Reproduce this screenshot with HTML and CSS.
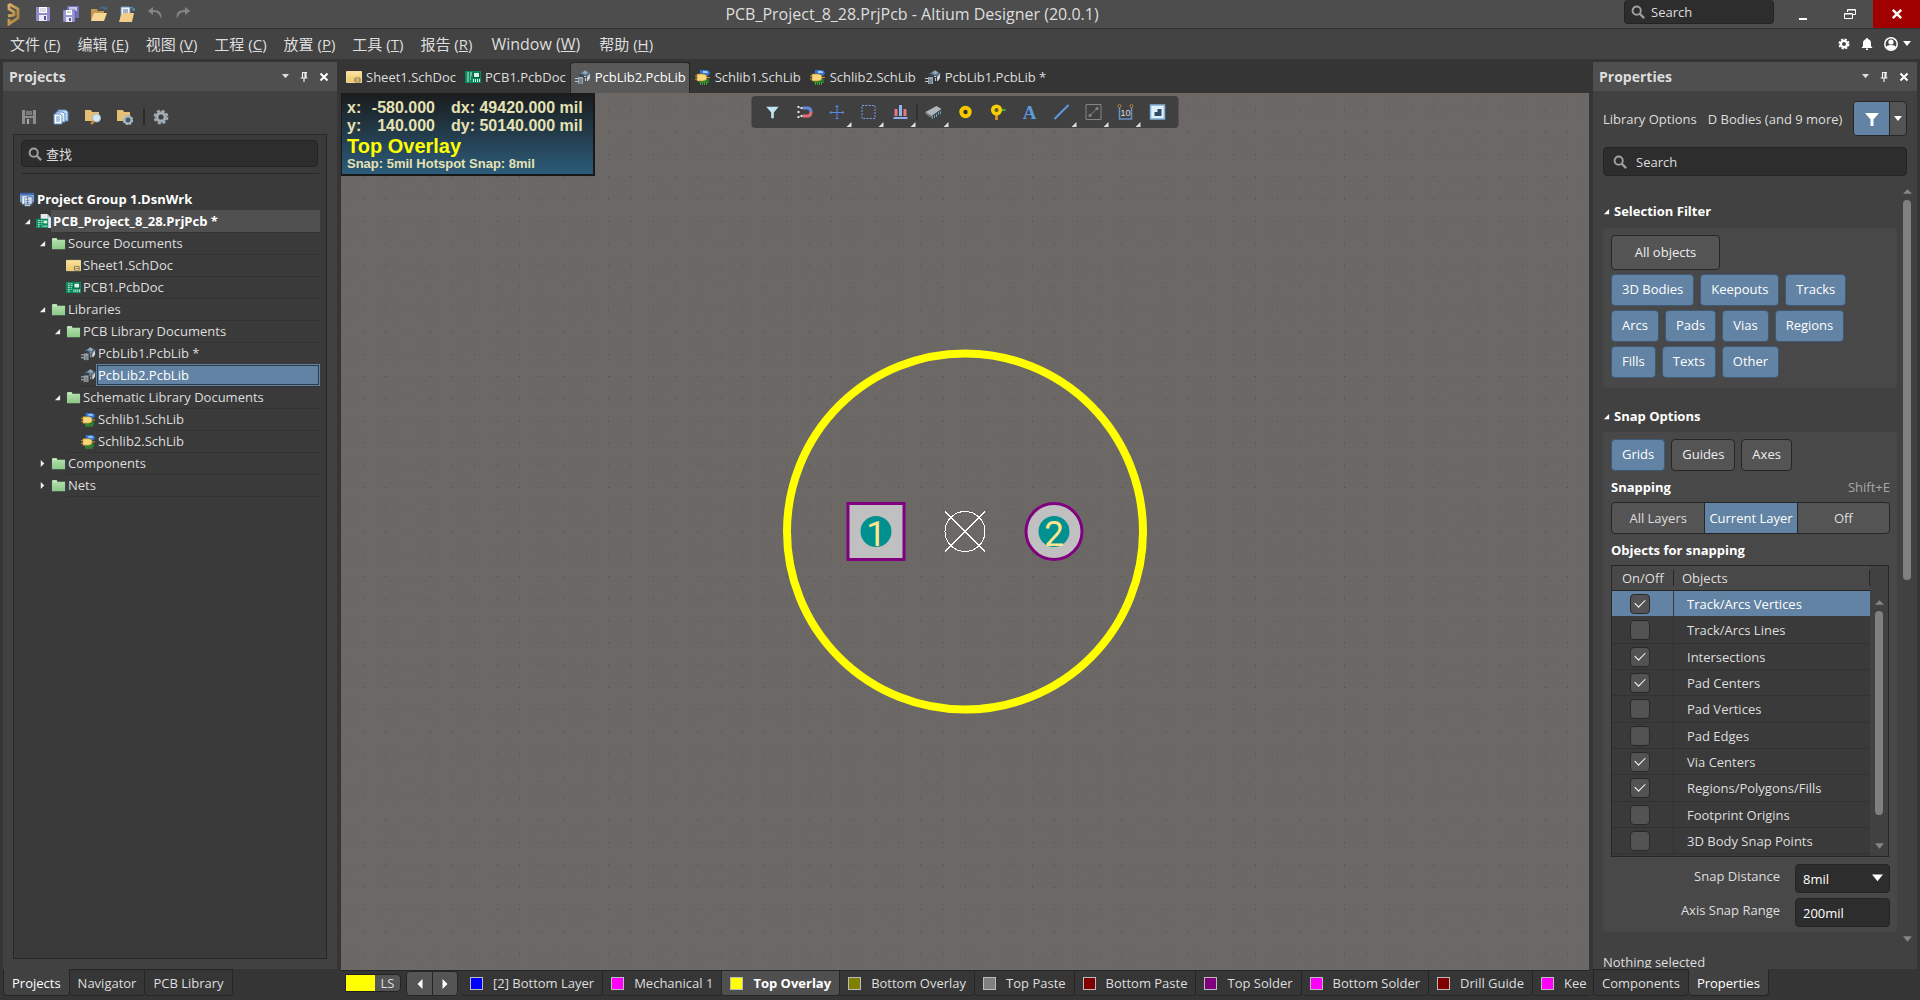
FILE: index.html
```html
<!DOCTYPE html>
<html lang="zh-CN">
<head>
<meta charset="utf-8">
<title>PCB_Project_8_28.PrjPcb - Altium Designer (20.0.1)</title>
<link rel="stylesheet" href="styles.css">
</head>
<body>
<svg class="defs" aria-hidden="true">
  <defs>
    <linearGradient id="gFolder" x1="0" y1="0" x2="0" y2="1"><stop offset="0" stop-color="#b8e2b2"/><stop offset="1" stop-color="#8cc888"/></linearGradient>
    <linearGradient id="gSheet" x1="0" y1="0" x2="0" y2="1"><stop offset="0" stop-color="#fbe3a0"/><stop offset="1" stop-color="#e9c766"/></linearGradient>
    <linearGradient id="gGold" x1="0" y1="0" x2="1" y2="1"><stop offset="0" stop-color="#d8b368"/><stop offset="1" stop-color="#a87f38"/></linearGradient>
    <symbol id="folder" viewBox="0 0 16 16"><path d="M1 4V3l1-1h4l1 2h8v10H1z" fill="url(#gFolder)"/><path d="M2 4h4" stroke="#d6f0d2"/></symbol>
    <symbol id="sheet" viewBox="0 0 16 16"><path d="M.5 2.500h15v11H.5z" fill="url(#gSheet)" stroke="#f4dc9c"/><path d="M9 9h5v4H9z" fill="#fff0c0" stroke="#8a7440"/><path d="M9 11h5" stroke="#8a7440"/></symbol>
    <symbol id="pcb" viewBox="0 0 16 16"><path d="M0 2h16v12H0z" fill="#0c8a5e"/><path d="M8 3h1v5h5V3h1v6H8z" fill="#065a3c"/><path d="M9 4h5v4H9z" fill="#d9f3e8"/><path d="M2 4h2m1 0h2M2 6h2m1 0h2M2 8h2m1 0h1M2 10h2m1 0h1M2 12h2" stroke="#bff0d8"/><path d="M8.500 10v3m2-3v3m2-3v3m2-3v3" stroke="#c4f0dc" stroke-width="1"/></symbol>
    <symbol id="pcblib" viewBox="0 0 16 16"><path d="M4 5l6-4 6 4-3 3-6-2z" fill="#5c7387"/><path d="M7 4l3-2.500 3 2-2 2z" fill="#93aaba"/><path d="M12 8l3-3v4l-2 3h-1z" fill="#cdd6dc"/><path d="M3 6l3-1 6 3-1 1-6-2z" fill="#35424d"/><path d="M3 8h5v7H3z" fill="#98a3ab"/><path d="M4 10h3v5H4z" fill="#76828c"/><path d="M0 9.500h3M0 12.500h3M9 7.500h2M10.500 9v3" stroke="#c3ccd2"/></symbol>
    <symbol id="schlib" viewBox="0 0 16 16"><path d="M5 1h6q3 0 4 3-1 3-4 3H5z" fill="#3277d8"/><path d="M8 2h3q2 0 2 2H8z" fill="#a6cdf8"/><path d="M4 10h10v4H4z" fill="#1f7b2b"/><path d="M5.500 13v3m2-3v3m2-3v3m2-3v3" stroke="#44a23c"/><path d="M2 5h6q4 0 4 3.500T8 12H2z" fill="#f7d67c" stroke="#a77b1a" stroke-width=".6"/><path d="M0 7h2M0 10h2m10-1.500h3" stroke="#d09b20"/></symbol>
    <symbol id="workspace" viewBox="0 0 16 16"><path d="M0 1h15v10H0z" fill="#7aa2dc"/><path d="M0 1h15v2H0z" fill="#3d67b1"/><path d="M2 4h6v9H2zM5 6h6v9H5z" fill="#e8f0fb" stroke="#60748e" stroke-width=".7"/><path d="M8 5h5v8H8z" fill="#cddcf2" stroke="#556c8c" stroke-width=".7"/><path d="M6 9h4M6 11h4M6 13h4" stroke="#5b7fb6" stroke-width=".8"/></symbol>
    <symbol id="project" viewBox="0 0 16 16"><path d="M5 0h7l4 4v11H5z" fill="#e6e9f1"/><path d="M12 0l4 4h-4z" fill="#b5bccd"/><path d="M0 5h13v10H0z" fill="#0c8a5e"/><path d="M2 7h2m1 0h2M2 9h2m1 0h2M2 11h2m1 0h1M2 13h2" stroke="#bff0d8"/><path d="M8 7h4v3H8z" fill="#d9f3e8"/><path d="M7.500 12v2m2-2v2m2-2v2" stroke="#c4f0dc"/></symbol>
    <symbol id="save" viewBox="0 0 16 16"><path d="M1 1h14v14H1z" fill="#8d8bc8"/><path d="M4 1h8v6H4z" fill="#fff"/><path d="M5 3h6M5 5h6" stroke="#b8b8cc"/><path d="M4 9h8v6H4z" fill="#e8e8f6"/><path d="M9 10h2v4H9z" fill="#55539a"/></symbol>
    <symbol id="savegray" viewBox="0 0 16 16"><path d="M1 1h14v14H1z" fill="#8b8b8b"/><path d="M4 1h8v6H4z" fill="#494949"/><path d="M5 3h6M5 5h6" stroke="#aaa"/><path d="M4 9h8v6H4z" fill="#4b4b4b"/><path d="M6 10h2v5H6z" fill="#aaa"/></symbol>
    <symbol id="saveall" viewBox="0 0 16 16"><path d="M4 0h12v12H4z" fill="#7270b4"/><path d="M6 1h8v4H6z" fill="#c9c8e8"/><path d="M0 4h12v12H0z" fill="#9a98d4" stroke="#5b599c" stroke-width=".6"/><path d="M3 4h6v5H3z" fill="#fff"/><path d="M4 6h4" stroke="#99a"/><path d="M3 11h6v5H3z" fill="#e8e8f6"/><path d="M6 12h2v3H6z" fill="#55539a"/></symbol>
    <symbol id="open" viewBox="0 0 16 16"><path d="M0 3h6l1 2h6v9H0z" fill="#c49a50"/><path d="M0 15L3 7h13l-3 8z" fill="#f6d694"/><path d="M9 3q3-4 5 0M12 3h3V0" fill="none" stroke="#3f739f" stroke-width="1.200"/></symbol>
    <symbol id="openproj" viewBox="0 0 16 16"><path d="M2 1h9v12H2z" fill="#eef3fb" stroke="#7390b5"/><path d="M4 4h5M4 6h5M4 8h5" stroke="#54759d"/><path d="M0 16l2-7 3-2h10l-2 9z" fill="#f2cd88"/><path d="M11 2q3-2 4 2M13 4h3V2" fill="none" stroke="#58a0d8"/></symbol>
    <symbol id="undo" viewBox="0 0 16 16"><path d="M6 1L1 5l5 4V6q6-1 8 7 2-9-8-9z" fill="#868686"/></symbol>
    <symbol id="docs" viewBox="0 0 16 16"><path d="M5 1h8l2 2v9H5z" fill="#bed8f7" stroke="#5b8cc5"/><path d="M3 3h7l2 2v8H3z" fill="#dfedfc" stroke="#5b8cc5"/><path d="M1 5h6l2 2v8H1z" fill="#fff" stroke="#5b8cc5"/><path d="M3 8h4M3 10h4M3 12h4" stroke="#5b8cc5"/></symbol>
    <symbol id="foldersearch" viewBox="0 0 16 16"><path d="M0 1h6l1 2h7v9H0z" fill="#e6bf74"/><circle cx="11.500" cy="9" r="4" fill="#d5e5f2" stroke="#a4bacd"/><path d="M9 12l-3 3" stroke="#c58a3e" stroke-width="2.500"/></symbol>
    <symbol id="foldergear" viewBox="0 0 16 16"><path d="M0 1h6l1 2h6v9H0z" fill="#e6bf74"/><circle cx="11" cy="11" r="3.500" fill="#4a5964" stroke="#a9bac6" stroke-width="2"/><circle cx="11" cy="11" r="4.700" fill="none" stroke="#a9bac6" stroke-width="1.200" stroke-dasharray="2 1.700"/></symbol>
    <symbol id="gear" viewBox="0 0 16 16"><circle cx="8" cy="8" r="4.200" fill="none" stroke="currentColor" stroke-width="3.200"/><circle cx="8" cy="8" r="6.400" fill="none" stroke="currentColor" stroke-width="2" stroke-dasharray="3 2.030"/></symbol>
    <symbol id="lens" viewBox="0 0 16 16"><circle cx="6.500" cy="6.500" r="4.700" fill="none" stroke="#a0a0a0" stroke-width="2.200"/><path d="M10 10l5 5" stroke="#a0a0a0" stroke-width="2.600"/></symbol>
    <symbol id="down" viewBox="0 0 8 8"><path d="M0 1h8L4 6z" fill="currentColor"/></symbol>
    <symbol id="up" viewBox="0 0 8 8"><path d="M0 6h8L4 2z" fill="currentColor"/></symbol>
    <symbol id="right" viewBox="0 0 8 8"><path d="M2 0v8l4-4z" fill="currentColor"/></symbol>
    <symbol id="left" viewBox="0 0 8 8"><path d="M6 0v8L2 4z" fill="currentColor"/></symbol>
    <symbol id="open-arrow" viewBox="0 0 8 8"><path d="M7 1v6H1z" fill="currentColor"/></symbol>
    <symbol id="pin" viewBox="0 0 10 10"><path d="M3 .5h5M3.500 1v5M7 1v5M6 1v5M1.500 6h7M5 6v4" fill="none" stroke="#f0f0f0" stroke-width="1.200"/></symbol>
    <symbol id="close" viewBox="0 0 10 10"><path d="M1.500 1.500l7 7m0-7l-7 7" stroke="#fff" stroke-width="2"/></symbol>
    <symbol id="funnel" viewBox="0 0 16 16"><path d="M1 2h14L9.500 8.500V15h-3V8.500z" fill="currentColor"/></symbol>
  </defs>
</svg>

<header class="titlebar">
  <div class="quick">
    <svg width="16" height="24" viewBox="0 0 16 24"><path d="M4 2l9 5v9L4 22v-5M4 2v5l5 3v3l-6 1" fill="none" stroke="url(#gGold)" stroke-width="2.800"/></svg>
    <button type="button" aria-label="Save"><svg><use href="#save"/></svg></button>
    <button type="button" aria-label="Save all"><svg><use href="#saveall"/></svg></button>
    <button type="button" aria-label="Open"><svg><use href="#open"/></svg></button>
    <button type="button" aria-label="Open project"><svg><use href="#openproj"/></svg></button>
    <button type="button" aria-label="Undo"><svg><use href="#undo"/></svg></button>
    <button type="button" aria-label="Redo"><svg class="mirror"><use href="#undo"/></svg></button>
  </div>
  <h1>PCB_Project_8_28.PrjPcb - Altium Designer (20.0.1)</h1>
  <div class="window-tools">
    <label class="field top-search"><svg><use href="#lens"/></svg><input type="text" aria-label="Search" value="Search"></label>
    <button type="button" class="win" aria-label="Minimize"><svg width="12" height="12"><path d="M2 11h8" stroke="#fff" stroke-width="2"/></svg></button>
    <button type="button" class="win" aria-label="Restore"><svg width="12" height="12" viewBox="0 0 12 12"><path d="M.5 5.500h8v5h-8zM.5 6h8M3.500 4V1.500h8v5H9M3.500 2h8" fill="none" stroke="#fff"/></svg></button>
    <button type="button" class="win close" aria-label="Close"><svg width="12" height="12"><use href="#close"/></svg></button>
  </div>
</header>

<nav class="menubar">
  <a href="#">文件 (<u>F</u>)</a><a href="#">编辑 (<u>E</u>)</a><a href="#">视图 (<u>V</u>)</a><a href="#">工程 (<u>C</u>)</a><a href="#">放置 (<u>P</u>)</a><a href="#">工具 (<u>T</u>)</a><a href="#">报告 (<u>R</u>)</a><a href="#" class="latin">Window (<u>W</u>)</a><a href="#">帮助 (<u>H</u>)</a>
  <div class="account">
    <button type="button" aria-label="Settings"><svg width="12" height="12"><use href="#gear"/></svg></button>
    <button type="button" aria-label="Notifications"><svg width="12" height="12" viewBox="0 0 12 12"><path d="M6 0q1 0 1 1 3 1 3 4v3l1.500 2H.5L2 8V5q0-3 3-4 0-1 1-1zM5 10.500h2V12H5z" fill="#fff"/></svg></button>
    <button type="button" aria-label="Account"><svg width="14" height="14" viewBox="0 0 14 14"><circle cx="7" cy="7" r="6.200" fill="none" stroke="#fff" stroke-width="1.500"/><circle cx="7" cy="5" r="2.600" fill="#fff"/><path d="M2 11q0-3 5-3t5 3q-2 2-5 2t-5-2z" fill="#fff"/></svg><svg width="8" height="8"><use href="#down"/></svg></button>
  </div>
</nav>

<main class="workspace">
  <aside class="panel">
    <header class="panel-head"><h2>Projects</h2><button type="button" aria-label="Panel menu"><svg class="caret"><use href="#down"/></svg></button><button type="button" aria-label="Pin"><svg><use href="#pin"/></svg></button><button type="button" aria-label="Close panel"><svg><use href="#close"/></svg></button></header>
    <div class="panel-body projects">
      <div class="toolrow">
        <button type="button" aria-label="Save document"><svg><use href="#savegray"/></svg></button>
        <button type="button" aria-label="Compile"><svg><use href="#docs"/></svg></button>
        <button type="button" aria-label="Explore"><svg><use href="#foldersearch"/></svg></button>
        <button type="button" aria-label="Project options"><svg><use href="#foldergear"/></svg></button>
        <i></i>
        <button type="button" class="steel" aria-label="Settings"><svg><use href="#gear"/></svg></button>
      </div>
      <div class="treebox">
        <label class="field tree-search"><svg><use href="#lens"/></svg><input type="text" aria-label="查找" value="查找"></label>
        <ul class="tree">
          <li class="root bold"><svg><use href="#workspace"/></svg><span>Project Group 1.DsnWrk</span></li>
          <li class="l1 bold current"><svg class="arrow"><use href="#open-arrow"/></svg><svg><use href="#project"/></svg><span>PCB_Project_8_28.PrjPcb *</span></li>
          <li class="l2"><svg class="arrow"><use href="#open-arrow"/></svg><svg><use href="#folder"/></svg><span>Source Documents</span></li>
          <li class="l3"><svg class="arrow"></svg><svg><use href="#sheet"/></svg><span>Sheet1.SchDoc</span></li>
          <li class="l3"><svg class="arrow"></svg><svg><use href="#pcb"/></svg><span>PCB1.PcbDoc</span></li>
          <li class="l2"><svg class="arrow"><use href="#open-arrow"/></svg><svg><use href="#folder"/></svg><span>Libraries</span></li>
          <li class="l3"><svg class="arrow"><use href="#open-arrow"/></svg><svg><use href="#folder"/></svg><span>PCB Library Documents</span></li>
          <li class="l4"><svg class="arrow"></svg><svg><use href="#pcblib"/></svg><span>PcbLib1.PcbLib *</span></li>
          <li class="l4 selected"><svg class="arrow"></svg><svg><use href="#pcblib"/></svg><span>PcbLib2.PcbLib</span></li>
          <li class="l3"><svg class="arrow"><use href="#open-arrow"/></svg><svg><use href="#folder"/></svg><span>Schematic Library Documents</span></li>
          <li class="l4"><svg class="arrow"></svg><svg><use href="#schlib"/></svg><span>Schlib1.SchLib</span></li>
          <li class="l4"><svg class="arrow"></svg><svg><use href="#schlib"/></svg><span>Schlib2.SchLib</span></li>
          <li class="l2"><svg class="arrow"><use href="#right"/></svg><svg><use href="#folder"/></svg><span>Components</span></li>
          <li class="l2 last"><svg class="arrow"><use href="#right"/></svg><svg><use href="#folder"/></svg><span>Nets</span></li>
        </ul>
      </div>
    </div>
    <nav class="panel-tabs"><button type="button" class="on">Projects</button><button type="button">Navigator</button><button type="button">PCB Library</button></nav>
  </aside>

  <section class="editor">
    <nav class="doc-tabs">
      <button type="button"><svg><use href="#sheet"/></svg>Sheet1.SchDoc</button>
      <button type="button"><svg><use href="#pcb"/></svg>PCB1.PcbDoc</button>
      <button type="button" class="on"><svg><use href="#pcblib"/></svg>PcbLib2.PcbLib</button>
      <button type="button"><svg><use href="#schlib"/></svg>Schlib1.SchLib</button>
      <button type="button"><svg><use href="#schlib"/></svg>Schlib2.SchLib</button>
      <button type="button"><svg><use href="#pcblib"/></svg>PcbLib1.PcbLib *</button>
    </nav>
    <div class="canvas">
      <svg class="board" width="100%" height="100%">
        <defs>
          <pattern id="minor" width="4.460" height="4.440" patternUnits="userSpaceOnUse"><rect width="1" height="1" fill="#5e5a58" opacity=".4"/></pattern>
          <pattern id="major" width="22.300" height="22.200" patternUnits="userSpaceOnUse"><rect width="1" height="1" fill="#4b4846"/></pattern>
        </defs>
        <svg x="50%" y="50%" overflow="visible">
          <rect x="-1600" y="-1200" width="3200" height="2400" fill="url(#minor)"/>
          <rect x="-1600" y="-1200" width="3200" height="2400" fill="url(#major)"/>
          <circle r="178" fill="none" stroke="#ff0" stroke-width="8"/>
          <rect x="-117" y="-28" width="56" height="56" fill="#c0c0c0" stroke="#800080" stroke-width="3"/>
          <circle cx="-89" r="15.500" fill="#009090"/>
          <circle cx="89" r="28" fill="#c0c0c0" stroke="#800080" stroke-width="3"/>
          <circle cx="89" r="15.500" fill="#009090"/>
          <text class="pad-no" x="-89" y="14">1</text>
          <text class="pad-no" x="89" y="14">2</text>
          <g fill="none" stroke="#fff" shape-rendering="crispEdges"><circle r="20"/><path d="M-20-20l40 40M20-20l-40 40"/></g>
        </svg>
      </svg>
      <div class="hud">
        <div class="coords"><span>x:</span><span class="num">-580.000</span><span>dx: 49420.000 mil</span><span>y:</span><span class="num">140.000</span><span>dy: 50140.000 mil</span></div>
        <strong>Top Overlay</strong>
        <small>Snap: 5mil Hotspot Snap: 8mil</small>
      </div>
      <div class="toolbar">
        <button type="button" aria-label="Filter" class="pale"><svg viewBox="-1 -1 18 18"><use href="#funnel" width="16" height="16"/></svg></button>
        <button type="button" aria-label="Snap"><svg viewBox="0 0 16 16"><path d="M6 4h5q3.500 0 3.500 4" fill="none" stroke="#6688d8" stroke-width="3"/><path d="M14.500 8q0 4-3.500 4H6" fill="none" stroke="#e06c74" stroke-width="3"/><path d="M1 2h2v2H1zM1 7h2v2H1zM1 12h2v2H1zM4 3h2v2H4zM4 11h2v2H4z" fill="#dceaf0"/></svg></button>
        <button type="button" aria-label="Move" class="more"><svg viewBox="0 0 16 16"><path d="M8.500 1v14M1 8.500h14M7 2.500h3M7 14.500h3M2.500 7v3M14.500 7v3" fill="none" stroke="#5a87e0"/></svg></button>
        <button type="button" aria-label="Select area" class="more"><svg viewBox="0 0 16 16"><path d="M1.500 1.500h13v13h-13z" fill="none" stroke="#7ca0f0" stroke-dasharray="2 1.250"/></svg></button>
        <button type="button" aria-label="Align" class="more"><svg viewBox="0 0 16 16"><path d="M2 5h3v7H2zM11 5h3v7h-3z" fill="#e57880"/><path d="M6.500 1h3v11h-3z" fill="#8bb8e8"/><path d="M1 14h14" stroke="#8baef0" stroke-width="2"/></svg></button>
        <i></i>
        <button type="button" aria-label="Component" class="more"><svg viewBox="0 0 16 16"><path d="M0 8L11 2l5 3-10 7z" fill="#aeb8ba"/><path d="M0 8l6 4v2l-6-4z" fill="#748083"/><path d="M7 12v3M9 11v3M11 10v3M13 8v3M15 7v3" stroke="#66a0ae"/></svg></button>
        <button type="button" aria-label="Pad"><svg viewBox="0 0 16 16"><circle cx="8" cy="8" r="4.200" fill="#333" stroke="#f6c800" stroke-width="4"/></svg></button>
        <button type="button" aria-label="Via"><svg viewBox="0 0 16 16"><path d="M10 6h6" stroke="#54a836" stroke-width="2"/><path d="M7 8v8" stroke="#e89932" stroke-width="2.500"/><circle cx="7" cy="6" r="3.800" fill="#635a30" stroke="#f6d000" stroke-width="3.500"/></svg></button>
        <button type="button" aria-label="String"><svg viewBox="0 0 16 16"><text class="letter" x="8" y="15">A</text></svg></button>
        <button type="button" aria-label="Line" class="more"><svg viewBox="0 0 16 16"><path d="M1 15L15 1" stroke="#5c9ade" stroke-width="2"/></svg></button>
        <button type="button" aria-label="Dimension" class="more"><svg viewBox="0 0 16 16"><path d="M.5.5h15v15H.5zM5 11l6-6" fill="none" stroke="#858585"/><circle cx="4.500" cy="11.500" r="1.500" fill="#858585"/><circle cx="11.500" cy="4.500" r="1.500" fill="#858585"/></svg></button>
        <button type="button" aria-label="Measure" class="more"><svg viewBox="0 0 16 16"><path d="M2 3v12h12V3" fill="none" stroke="#6890c0" stroke-width="1.500"/><circle cx="2" cy="2" r="1.500" fill="#333" stroke="#b88738"/><circle cx="14" cy="2" r="1.500" fill="#333" stroke="#b88738"/><text class="ten" x="8" y="12">10</text></svg></button>
        <button type="button" aria-label="Board region"><svg viewBox="0 0 16 16"><path d="M1 1h14v14H1z" fill="#dff0fb" stroke="#80b0d8" stroke-width="1.500"/><path d="M8 5h4v7H5V8h3z" fill="#304b68"/></svg></button>
      </div>
    </div>
    <div class="layers">
      <button type="button" class="layer-set"><b></b><span>LS</span></button>
      <div class="stepper"><button type="button" aria-label="Previous layers"><svg><use href="#left"/></svg></button><button type="button" aria-label="Next layers"><svg><use href="#right"/></svg></button></div>
      <nav class="layer-tabs">
        <button type="button"><i class="c-blue"></i>[2] Bottom Layer</button>
        <button type="button"><i class="c-magenta"></i>Mechanical 1</button>
        <button type="button" class="on"><i class="c-yellow"></i>Top Overlay</button>
        <button type="button"><i class="c-olive"></i>Bottom Overlay</button>
        <button type="button"><i class="c-gray"></i>Top Paste</button>
        <button type="button"><i class="c-maroon"></i>Bottom Paste</button>
        <button type="button"><i class="c-purple"></i>Top Solder</button>
        <button type="button"><i class="c-magenta"></i>Bottom Solder</button>
        <button type="button"><i class="c-maroon"></i>Drill Guide</button>
        <button type="button"><i class="c-magenta"></i>Kee</button>
      </nav>
    </div>
  </section>

  <aside class="panel">
    <header class="panel-head"><h2>Properties</h2><button type="button" aria-label="Panel menu"><svg class="caret"><use href="#down"/></svg></button><button type="button" aria-label="Pin"><svg><use href="#pin"/></svg></button><button type="button" aria-label="Close panel"><svg><use href="#close"/></svg></button></header>
    <div class="panel-body props">
      <div class="scope"><span>Library Options</span><span>D Bodies (and 9 more)</span>
        <div class="split"><button type="button" class="blue" aria-label="Filter"><svg width="16" height="16"><use href="#funnel"/></svg></button><button type="button" aria-label="Filter menu"><svg width="8" height="8"><use href="#down"/></svg></button></div>
      </div>
      <label class="field prop-search"><svg><use href="#lens"/></svg><input type="text" aria-label="Search properties" value="Search"></label>
      <div class="scroll">
        <div class="sections">
          <h3><svg><use href="#open-arrow"/></svg>Selection Filter</h3>
          <div class="card">
            <div class="chips"><button type="button" class="wide">All objects</button></div>
            <div class="chips"><button type="button" class="blue">3D Bodies</button><button type="button" class="blue">Keepouts</button><button type="button" class="blue">Tracks</button></div>
            <div class="chips"><button type="button" class="blue">Arcs</button><button type="button" class="blue">Pads</button><button type="button" class="blue">Vias</button><button type="button" class="blue">Regions</button></div>
            <div class="chips"><button type="button" class="blue">Fills</button><button type="button" class="blue">Texts</button><button type="button" class="blue">Other</button></div>
          </div>
          <h3><svg><use href="#open-arrow"/></svg>Snap Options</h3>
          <div class="card">
            <div class="chips"><button type="button" class="blue">Grids</button><button type="button">Guides</button><button type="button">Axes</button></div>
            <div class="caption"><h4>Snapping</h4><span>Shift+E</span></div>
            <div class="segmented"><button type="button">All Layers</button><button type="button" class="blue">Current Layer</button><button type="button">Off</button></div>
            <div class="caption"><h4>Objects for snapping</h4></div>
            <div class="grid">
              <table>
                <thead><tr><th><span>On/Off</span></th><th><span>Objects</span></th></tr></thead>
                <tbody>
                  <tr class="hit"><td><input type="checkbox" id="o1" checked></td><td><label for="o1">Track/Arcs Vertices</label></td></tr>
                  <tr><td><input type="checkbox" id="o2"></td><td><label for="o2">Track/Arcs Lines</label></td></tr>
                  <tr><td><input type="checkbox" id="o3" checked></td><td><label for="o3">Intersections</label></td></tr>
                  <tr><td><input type="checkbox" id="o4" checked></td><td><label for="o4">Pad Centers</label></td></tr>
                  <tr><td><input type="checkbox" id="o5"></td><td><label for="o5">Pad Vertices</label></td></tr>
                  <tr><td><input type="checkbox" id="o6"></td><td><label for="o6">Pad Edges</label></td></tr>
                  <tr><td><input type="checkbox" id="o7" checked></td><td><label for="o7">Via Centers</label></td></tr>
                  <tr><td><input type="checkbox" id="o8" checked></td><td><label for="o8">Regions/Polygons/Fills</label></td></tr>
                  <tr><td><input type="checkbox" id="o9"></td><td><label for="o9">Footprint Origins</label></td></tr>
                  <tr><td><input type="checkbox" id="o10"></td><td><label for="o10">3D Body Snap Points</label></td></tr>
                </tbody>
              </table>
              <div class="bar inner"><svg><use href="#up"/></svg><div class="track"><b></b></div><svg><use href="#down"/></svg></div>
            </div>
            <div class="formrow"><label for="dist">Snap Distance</label><span class="field select"><select id="dist"><option>8mil</option></select><svg><use href="#down"/></svg></span></div>
            <div class="formrow"><label for="range">Axis Snap Range</label><span class="field"><input type="text" id="range" value="200mil"></span></div>
          </div>
        </div>
        <div class="bar outer"><svg><use href="#up"/></svg><div class="track"><b></b></div><svg><use href="#down"/></svg></div>
      </div>
      <p class="status">Nothing selected</p>
    </div>
    <nav class="panel-tabs"><button type="button">Components</button><button type="button" class="on">Properties</button></nav>
  </aside>
</main>
</body>
</html>
```
FILE: styles.css
```css
* { box-sizing: border-box; }
body {
  margin: 0; height: 100vh; overflow: hidden; display: flex; flex-direction: column;
  background: #353535; color: #dedede;
  font: 13px/20px "Open Sans", "Noto Sans CJK SC", sans-serif;
}
button, input, select { font: inherit; color: inherit; margin: 0; padding: 0; border: 0; background: none; outline: 0; }
button { display: flex; align-items: center; justify-content: center; white-space: nowrap; }
input, select { min-width: 0; flex: 1; appearance: none; }
h1, h2, h3, h4, p, ul { margin: 0; padding: 0; list-style: none; }
svg { flex: none; display: block; }
a { color: inherit; text-decoration: none; }
.defs { position: absolute; width: 0; height: 0; }
.blue { background: #6283a3; color: #fff; }

.field {
  display: flex; align-items: center; background: #2d2d2d;
  border: 1px solid #242424; border-radius: 4px;
}
.field > svg { width: 14px; height: 14px; }

/* title bar */
.titlebar {
  display: grid; grid-template-columns: 1fr auto 1fr; height: 29px;
  background: #4d4d4d; border-bottom: 1px solid #303030;
}
.quick { display: flex; align-items: center; gap: 12px; padding-left: 5px; }
.quick > svg { margin-right: 2px; }
.quick button svg { width: 16px; height: 16px; }
.mirror { transform: scaleX(-1); }
.titlebar h1 { padding-right: 96px; font-size: 16px; font-weight: 400; line-height: 28px; }
.window-tools { display: flex; justify-content: flex-end; align-items: flex-start; }
.top-search { width: 150px; height: 24px; margin-right: 5px; padding-left: 6px; gap: 6px; border-top: 0; }
.win { width: 47px; height: 28px; }
.close { background: #a00000; }

/* menu bar */
.menubar {
  display: flex; align-items: center; gap: 17px; height: 30px; margin-bottom: 3px; padding-left: 10px;
  background: #434343; font-size: 15px;
}
.menubar .latin { font-size: 16px; margin: 0 2px; }
.account { margin-left: auto; display: flex; gap: 11px; padding-right: 9px; color: #fff; }
.account button { gap: 5px; }

/* panels */
.workspace { flex: 1; min-height: 0; display: grid; grid-template-columns: 334px 1fr 324px; gap: 4px; padding: 0 3px; }
.panel { display: flex; flex-direction: column; min-height: 0; }
.panel-head { display: flex; align-items: center; gap: 10px; height: 29px; padding: 0 8px 0 6px; background: #4f4f4f; }
.panel-head h2 { flex: 1; font-size: 14px; }
.panel-head svg { width: 10px; height: 10px; }
.panel-head .caret { width: 7px; height: 7px; }
.panel-body { flex: 1; min-height: 0; display: flex; flex-direction: column; background: #414141; }
.panel-tabs { display: flex; height: 31px; align-items: flex-start; }
.panel-tabs button {
  height: 27px; padding: 0 8px; border: 1px solid #252525; border-left-width: 0; border-radius: 0 0 4px 4px; background: #363636;
}
.panel-tabs button:first-child { border-left-width: 1px; }
.panel-tabs .on { background: #414141; border-top-color: #414141; color: #fff; }

/* projects */
.projects { padding: 0 10px 10px; }
.toolrow { display: flex; align-items: center; gap: 16px; height: 43px; padding: 9px 8px 0; }
.toolrow svg { width: 16px; height: 16px; }
.toolrow i { width: 2px; height: 16px; background: #2a2a2a; margin-right: -8px; margin-left: -6px; }
.steel { color: #a3adb5; }
.treebox { flex: 1; border: 1px solid #272727; background: #3a3a3a; padding: 5px 7px 0 6px; }
.tree-search { height: 27px; padding-left: 6px; gap: 4px; margin: 0 1px; }
.tree { border-top: 1px solid #272727; margin: 6px 0 0 2px; padding-top: 14px; }
.tree li { display: flex; height: 22px; align-items: center; margin: 0 -1px 0 -2px; }
.tree svg { width: 15px; height: 15px; }
.tree svg.arrow { width: 7px; height: 7px; margin-right: 5px; color: #f0f0f0; }
.tree span { flex: 1; height: 22px; padding-left: 2px; border-top: 1px solid #323232; line-height: 20px; white-space: nowrap; }
.tree .bold { font-weight: 700; color: #fff; }
.tree .root span { border-color: transparent; }
.tree .l1 { padding-left: 4px; }
.tree .l2 { padding-left: 19px; }
.tree .l3 { padding-left: 34px; }
.tree .l4 { padding-left: 49px; }
.tree .current span { background: #505050; border-color: #505050; }
.tree .selected span { background: #6283a3; border: 1px solid #6283a3; box-shadow: inset 0 0 0 1px #2d3a48; color: #fff; padding-left: 1px; }
.tree .last span { height: 23px; border-bottom: 1px solid #323232; }

/* editor */
.editor { min-width: 0; display: flex; flex-direction: column; }
.doc-tabs { display: flex; height: 31px; }
.doc-tabs button { height: 31px; padding: 0 3px 2px 4px; gap: 4px; border: 1px solid transparent; border-bottom: 0; border-radius: 4px 4px 0 0; }
.doc-tabs .on { background: #595959; border-color: #252525; color: #fff; }
.doc-tabs svg { width: 16px; height: 16px; }
.canvas { flex: 1; min-height: 0; position: relative; overflow: hidden; background: #6c6866; }
.board { position: absolute; inset: 0; }
.pad-no { font: 35px "Liberation Sans Narrow", "Roboto", sans-serif; fill: #ffe68c; text-anchor: middle; }
.hud {
  position: absolute; left: 0; top: 0; width: 254px; height: 83px; padding: 6px 0 0 5px;
  border: solid #181818; border-width: 0 2px 2px 1px;
  background: linear-gradient(#1a1b1c, #2c5c7a);
  color: #e6e2b4; font: bold 16px/18px "Liberation Sans", sans-serif;
}
.coords { display: grid; grid-template-columns: 24px 64px auto; white-space: nowrap; }
.coords span:nth-child(3n) { padding-left: 16px; }
.num { text-align: right; }
.hud strong { display: block; font-size: 20px; line-height: 22px; color: #ff0; }
.hud small { display: block; font-size: 13px; line-height: 14px; }
.toolbar {
  position: absolute; top: 3px; left: 50%; transform: translateX(-50%);
  display: flex; align-items: center; height: 32px; padding: 0 5px; border-radius: 4px; background: #404040;
}
.toolbar button { position: relative; width: 32px; height: 32px; }
.toolbar button svg { width: 16px; height: 16px; overflow: visible; }
.toolbar i { width: 1px; height: 16px; background: #222; }
.toolbar .more::after { content: ""; position: absolute; right: 1px; bottom: 1px; border: solid transparent; border-width: 0 0 5px 5px; border-bottom-color: #ddd; }
.pale { color: #bfe3f0; }
.letter { font: bold 19px "Liberation Serif", serif; fill: #5c9ade; text-anchor: middle; }
.ten { font: 9px "Liberation Sans", sans-serif; fill: #ddd; text-anchor: middle; }

/* layer bar */
.layers { display: flex; height: 30px; overflow: hidden; align-items: flex-start; border-top: 1px solid #252525; }
.layer-set { flex: none; margin: 3px 5px 0 4px; border: 1px solid #222; border-radius: 0 4px 4px 0; width: 56px; height: 18px; background: #555; }
.layer-set b { flex: 1; align-self: stretch; background: #ff0; }
.layer-set span { width: 25px; }
.stepper { flex: none; display: flex; height: 25px; margin-right: 4px; border: 1px solid #262626; border-radius: 4px; background: #555; color: #fff; }
.stepper button { width: 25px; }
.stepper button + button { border-left: 1px solid #262626; }
.stepper svg { width: 10px; height: 10px; }
.layer-tabs { flex: 1; min-width: 0; display: flex; overflow: hidden; }
.layer-tabs button { flex: none; height: 25px; padding: 0 8px; border: solid #262626; border-width: 0 1px 1px 0; border-radius: 0 0 3px 3px; background: #363636; }
.layer-tabs i { width: 13px; height: 13px; margin-right: 10px; border: 1px solid #bbb; }
.layer-tabs .on { background: #4f4f4f; color: #fff; font-weight: 700; }
.c-blue { background: #00f; } .c-magenta { background: #f0f; } .c-yellow { background: #ff0; }
.c-olive { background: #808000; } .c-gray { background: #808080; } .c-maroon { background: #800000; } .c-purple { background: #800080; }

/* properties */
.props { padding: 10px 0 0 10px; }
.scope { display: flex; align-items: center; height: 35px; margin-right: 10px; gap: 11px; white-space: nowrap; }
.split { margin-left: auto; display: flex; height: 35px; border: 1px solid #262626; border-radius: 4px; overflow: hidden; background: #545454; color: #fff; }
.split button:first-child { width: 36px; }
.split button:last-child { width: 17px; border-left: 1px solid #262626; }
.prop-search { height: 29px; margin: 11px 10px 11px 0; padding-left: 9px; gap: 9px; }
.scroll { display: flex; height: 757px; flex: none; }
.sections { flex: 1; min-width: 0; }
h3 { display: flex; align-items: center; gap: 4px; height: 20px; margin: 14px 0 7px; font-size: 13px; color: #fff; }
h3 svg { width: 7px; height: 7px; }
.card + h3 { margin: 18px 0 6px; }
.card { padding: 7px 7px 5px 8px; border-radius: 4px; background: #484848; }
.chips { display: flex; gap: 6px; }
.chips + .chips { margin-top: 4px; }
.chips:last-child { margin-bottom: 5px; }
.chips button { height: 32px; padding: 0 10px 2px; border: 1px solid #262626; border-radius: 4px; background: #545454; color: #eee; }
.chips .wide { width: 109px; height: 35px; }
.chips .blue { background: #6283a3; border-color: #3c5a78; color: #fff; }
.caption { display: flex; justify-content: space-between; height: 31px; align-items: center; }
.caption h4 { font-size: 13px; color: #fff; }
.caption span { color: #a8a8a8; }
.segmented { display: grid; grid-template-columns: 1fr 1fr 1fr; height: 32px; border: 1px solid #262626; border-radius: 4px; background: #545454; overflow: hidden; }
.segmented button + button { border-left: 1px solid #262626; }
.grid { display: flex; height: 292px; margin-right: 1px; border: 1px solid #262626; overflow: hidden; background: #3a3a3a; }
table { flex: 1; border-collapse: separate; border-spacing: 0; align-self: flex-start; }
th { height: 25px; padding: 0; background: #484848; border-bottom: 1px solid #262626; font-weight: 400; text-align: left; }
th span { display: block; line-height: 16px; padding-left: 8px; border-right: 1px solid #262626; }
th:first-child { width: 62px; }
th:first-child span { padding-left: 10px; }
td { height: 26px; padding: 0 0 0 13px; border-bottom: 1px solid #323232; line-height: 20px; }
tr:nth-child(3n+2) td { height: 27px; }
td:first-child { padding: 0 6px 0 0; border-right: 1px solid #323232; }
.hit td { background: #6283a3; color: #fff; border-color: #3a3a3a; }
td input { display: block; width: 20px; height: 20px; margin: 0 auto; border: 1px solid #282828; border-radius: 4px; background: #535353; }
td input:checked::after { content: ""; display: block; width: 5px; height: 9px; margin: 2px 0 0 6px; border: solid #fff; border-width: 0 1px 1px 0; transform: rotate(45deg); }
.bar { display: flex; flex-direction: column; align-items: center; color: #858585; }
.bar svg { width: 9px; height: 9px; }
.track { flex: 1; margin: 4px 0; width: 8px; }
.track b { display: block; border-radius: 4px; background: #808080; }
.inner { width: 18px; padding: 32px 0 5px; background: #414141; }
.inner b { height: 90%; }
.outer { width: 20px; }
.outer b { height: 52%; }
.formrow { display: grid; grid-template-columns: 1fr 95px; gap: 15px; height: 29px; margin-top: 7px; }
.formrow + .formrow { margin-top: 5px; }
.formrow > label { text-align: right; line-height: 24px; }
.formrow .field { padding: 0 6px 0 7px; color: #fff; }
.select svg { width: 11px; height: 11px; }
.status { margin-top: 9px; line-height: 18px; height: 15px; overflow: hidden; flex: none; }
```
